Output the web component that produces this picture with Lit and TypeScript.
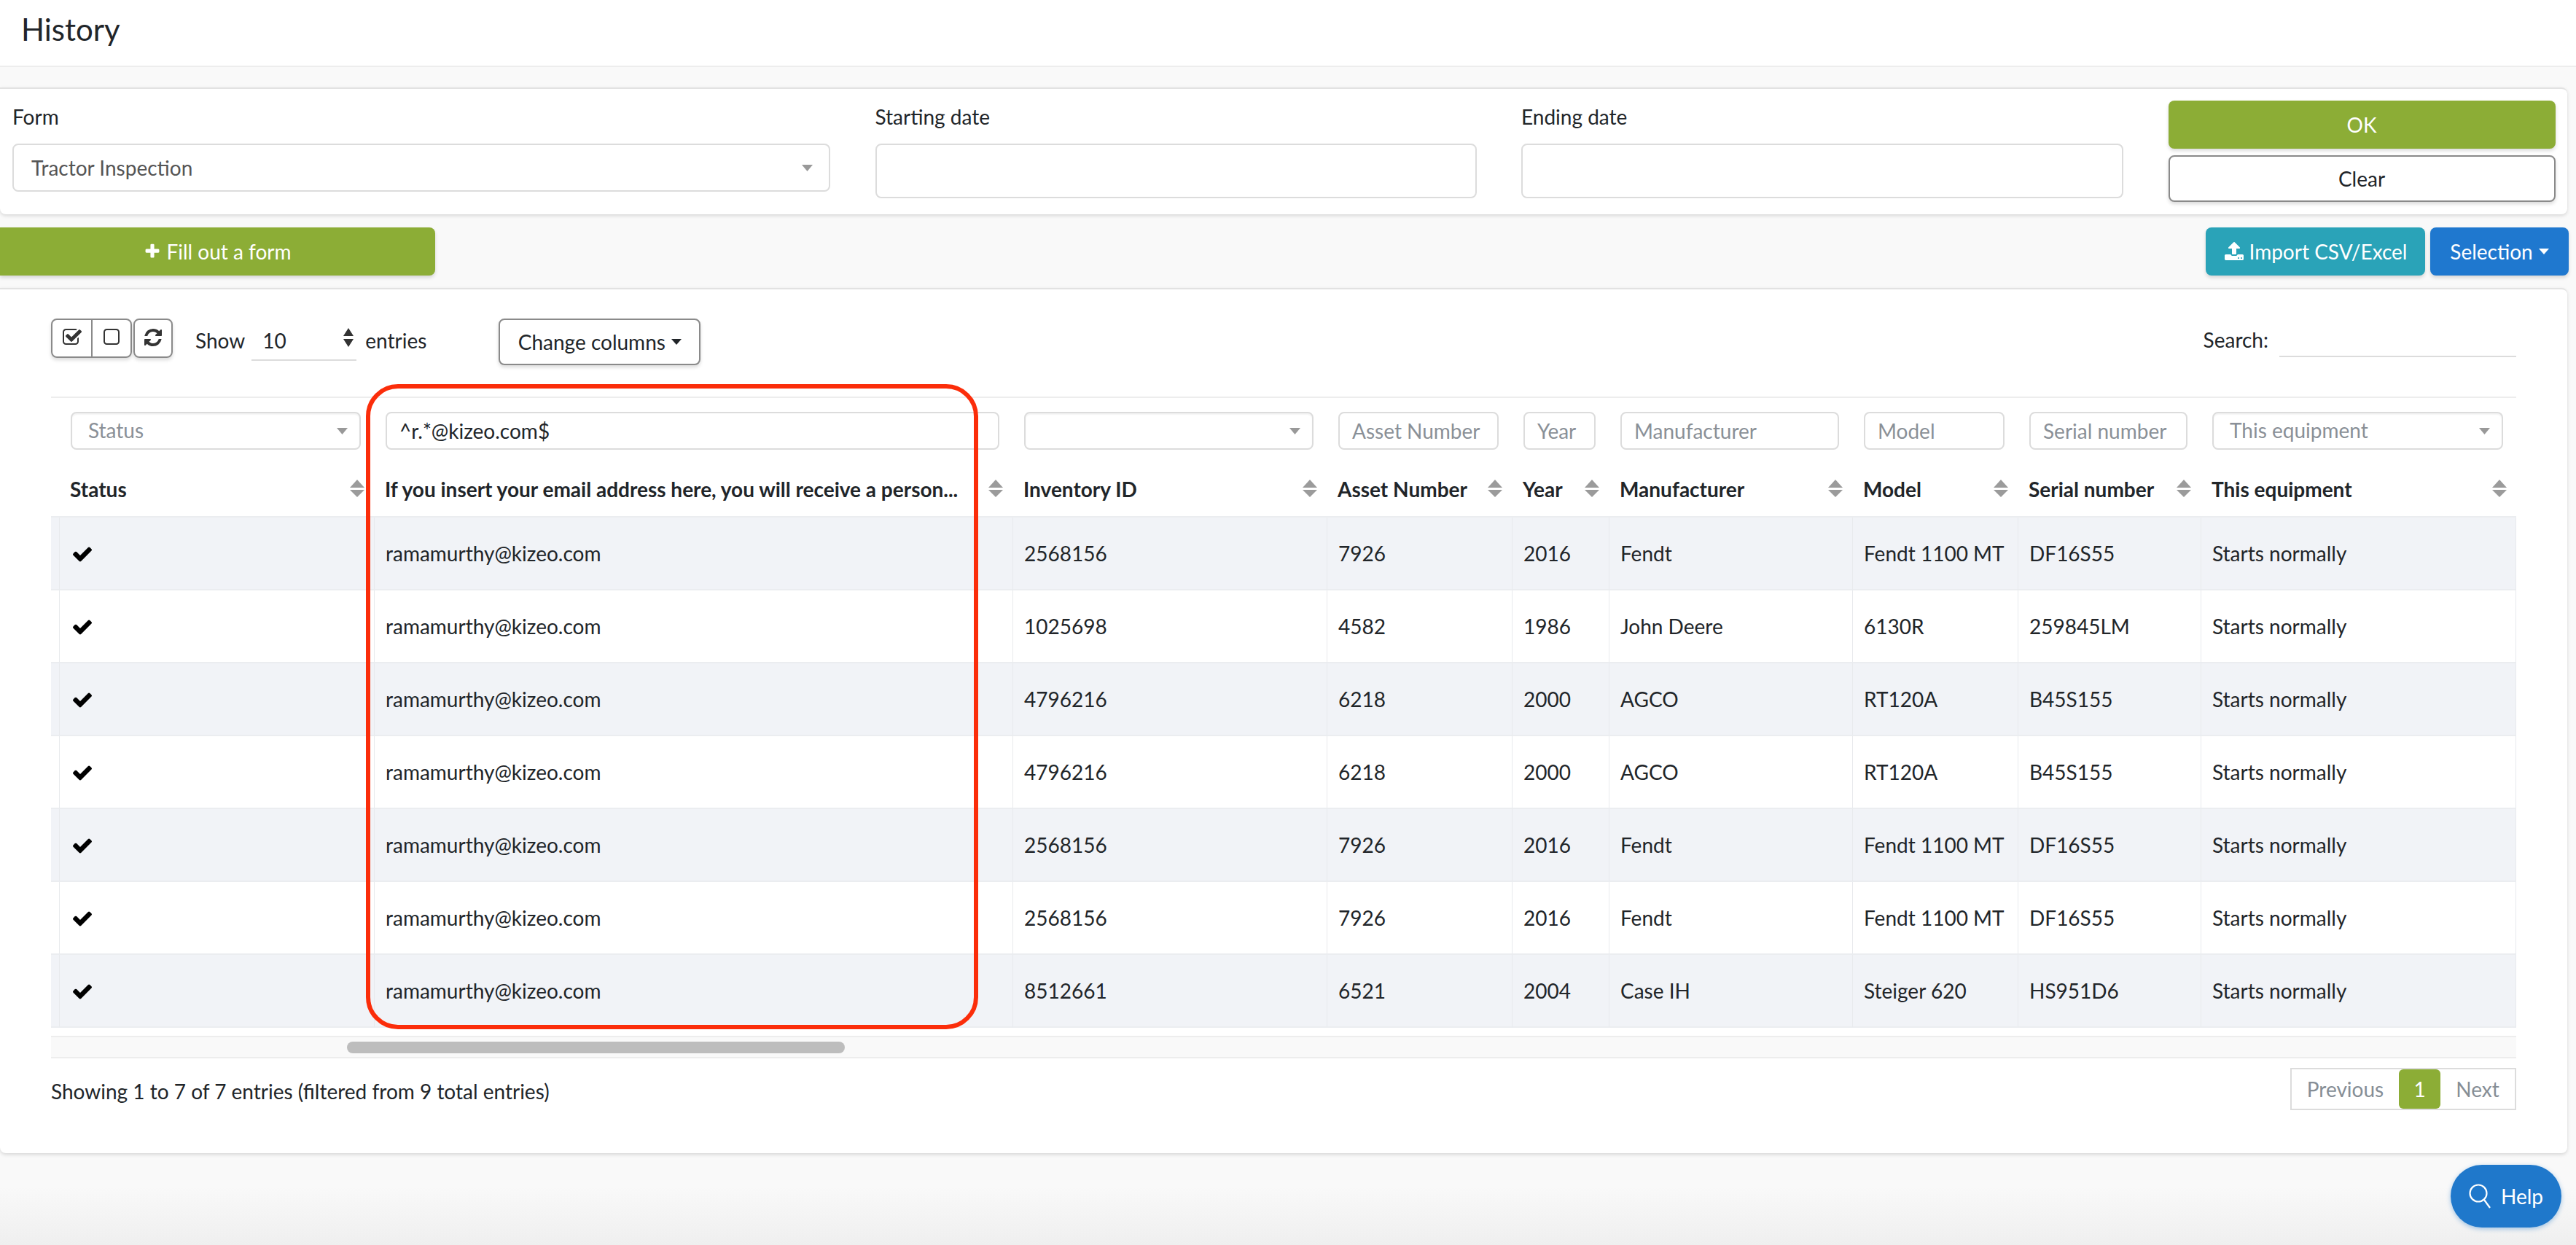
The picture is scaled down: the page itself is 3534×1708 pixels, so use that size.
import { LitElement, html, css, svg } from "lit";
import { customElement } from "lit/decorators.js";

const ICONS: Record<string, string> = {
  check: "M1671 566q0 40-28 68l-724 724-136 136q-28 28-68 28t-68-28l-136-136-362-362q-28-28-28-68t28-68l136-136q28-28 68-28t68 28l294 295 656-657q28-28 68-28t68 28l136 136q28 28 28 68z",
  plus: "M1600 736v192q0 40-28 68t-68 28h-416v416q0 40-28 68t-68 28h-192q-40 0-68-28t-28-68v-416h-416q-40 0-68-28t-28-68v-192q0-40 28-68t68-28h416v-416q0-40 28-68t68-28h192q40 0 68 28t28 68v416h416q40 0 68 28t28 68z",
  upload: "M1344 1472q0-26-19-45t-45-19-45 19-19 45 19 45 45 19 45-19 19-45zm256 0q0-26-19-45t-45-19-45 19-19 45 19 45 45 19 45-19 19-45zm128-224v320q0 40-28 68t-68 28h-1472q-40 0-68-28t-28-68v-320q0-40 28-68t68-28h427q21 56 70.5 92t110.5 36h256q61 0 110.5-36t70.5-92h427q40 0 68 28t28 68zm-325-648q-17 40-59 40h-256v448q0 26-19 45t-45 19h-256q-26 0-45-19t-19-45v-448h-256q-42 0-59-40-17-39 14-69l448-448q18-19 45-19t45 19l448 448q31 30 14 69z",
  refresh: "M1639 1056q0 5-1 7-64 268-268 434.5t-478 166.5q-146 0-282.5-55t-243.5-157l-129 129q-19 19-45 19t-45-19-19-45v-448q0-26 19-45t45-19h448q26 0 45 19t19 45-19 45l-137 137q71 66 161 102t187 36q134 0 250-65t186-179q11-17 53-117 8-23 30-23h192q13 0 22.5 9.5t9.5 22.5zm25-800v448q0 26-19 45t-45 19h-448q-26 0-45-19t-19-45 19-45l138-138q-148-137-349-137-134 0-250 65t-186 179q-11 17-53 117-8 23-30 23h-199q-13 0-22.5-9.5t-9.5-22.5v-7q65-268 270-434.5t480-166.5q146 0 284 55.5t245 156.5l130-129q19-19 45-19t45 19 19 45z",
  checkSquare: "M1472 930v318q0 119-84.5 203.5t-203.5 84.5h-832q-119 0-203.5-84.5t-84.5-203.5v-832q0-119 84.5-203.5t203.5-84.5h832q63 0 117 25 15 7 18 23 3 17-9 29l-49 49q-10 10-23 10-3 0-9-2-23-6-45-6h-832q-66 0-113 47t-47 113v832q0 66 47 113t113 47h832q66 0 113-47t47-113v-254q0-13 9-22l64-64q10-10 23-10 6 0 12 3 20 8 20 29zm231-489l-814 814q-24 24-57 24t-57-24l-430-430q-24-24-24-57t24-57l110-110q24-24 57-24t57 24l263 263 647-647q24-24 57-24t57 24l110 110q24 24 24 57t-24 57z",
  square: "M1312 256h-832q-66 0-113 47t-47 113v832q0 66 47 113t113 47h832q66 0 113-47t47-113v-832q0-66-47-113t-113-47zm288 160v832q0 119-84.5 203.5t-203.5 84.5h-832q-119 0-203.5-84.5t-84.5-203.5v-832q0-119 84.5-203.5t203.5-84.5h832q119 0 203.5 84.5t84.5 203.5z",
};

const fa = (n: string, size: number) => html`<svg class="fa" width=${size} height=${size} viewBox="0 0 1792 1792" fill="currentColor">${svg`<path d=${ICONS[n]}></path>`}</svg>`;

const caret = html`<svg class="caret" width="15" height="9" viewBox="0 0 15 9"><path d="M0 0H15L7.5 9Z" fill="#999"></path></svg>`;
const smallCaret = html`<svg class="scaret" width="14" height="8" viewBox="0 0 14 8"><path d="M0 0H14L7 8Z" fill="currentColor"></path></svg>`;
const sortIcon = html`<svg class="sort" width="20" height="24" viewBox="0 0 20 24"><path d="M10 0L20 11H0Z" fill="#9b9b9b"></path><path d="M0 14H20L10 24Z" fill="#9b9b9b"></path></svg>`;

type Row = [string, string, string, string, string, string];
const ROWS: Row[] = [
  ["2568156", "7926", "2016", "Fendt", "Fendt 1100 MT", "DF16S55"],
  ["1025698", "4582", "1986", "John Deere", "6130R", "259845LM"],
  ["4796216", "6218", "2000", "AGCO", "RT120A", "B45S155"],
  ["4796216", "6218", "2000", "AGCO", "RT120A", "B45S155"],
  ["2568156", "7926", "2016", "Fendt", "Fendt 1100 MT", "DF16S55"],
  ["2568156", "7926", "2016", "Fendt", "Fendt 1100 MT", "DF16S55"],
  ["8512661", "6521", "2004", "Case IH", "Steiger 620", "HS951D6"],
];

const COLS = [11, 432, 876, 431, 254, 133, 334, 227, 251, 433];
const HEADS = ["Status", "If you insert your email address here, you will receive a person...", "Inventory ID", "Asset Number", "Year", "Manufacturer", "Model", "Serial number", "This equipment"];

@customElement("app-root")
export class AppRoot extends LitElement {
  static styles = css`
    :host {
      display: block;
      width: 3534px;
      min-height: 1708px;
      position: relative;
      overflow: hidden;
      font-family: Lato, "Open Sans", sans-serif;
      font-size: 28px;
      line-height: 34px;
      color: #212529;
      background: linear-gradient(to bottom, #f9f9f9 calc(100% - 80px), #efefef 100%);
    }
    * { box-sizing: border-box; }
    .fa { display: block; flex: none; }
    .topbar {
      height: 92px;
      background: #fff;
      border-bottom: 2px solid #ededed;
      padding: 18px 0 0 29px;
    }
    .topbar h1 { margin: 0; font-weight: 400; font-size: 42px; line-height: 44px; }
    .card {
      background: #fff;
      border-top: 2px solid #e2e2e2;
      border-radius: 0 8px 8px 8px;
      box-shadow: 0 2px 5px rgba(0, 0, 0, 0.14);
      margin-right: 12px;
    }
    .form-card {
      margin-top: 28px;
      height: 174px;
      display: flex;
      gap: 61.5px;
      padding: 16px 17px 0;
    }
    .field { flex: none; padding-top: 5px; }
    .field label { display: block; line-height: 34px; margin-bottom: 20px; }
    .control {
      border: 2px solid #dcdcdc;
      border-radius: 8px;
      background: #fff;
    }
    .select {
      display: flex;
      align-items: center;
      justify-content: space-between;
      color: #555;
    }
    .main-select { height: 66px; padding: 0 24px; }
    .main-select .caret { margin-right: -2px; }
    .date { height: 75px; }
    .form-btns { flex: none; width: 531px; display: flex; flex-direction: column; gap: 9px; }
    .btn {
      display: flex;
      align-items: center;
      justify-content: center;
      border-radius: 8px;
      color: #fff;
      box-shadow: 0 3px 5px rgba(0, 0, 0, 0.14);
    }
    .green { background: #8cad36; }
    .teal { background: #2aa3b8; }
    .blue { background: #1f78cf; }
    .outline { background: #fff; color: #212529; border: 2px solid #8a8a8a; }
    .ok { height: 66px; }
    .clear { height: 64px; }
    .actions {
      display: flex;
      justify-content: space-between;
      margin-top: 18px;
      height: 66px;
      padding-right: 10px;
    }
    .fill { width: 597px; border-radius: 0 8px 8px 0; gap: 7px; }
    .right-actions { display: flex; gap: 7px; }
    .import { width: 301px; gap: 7px; }
    .selection { width: 190px; gap: 8px; }
    .table-card {
      margin-top: 17px;
      height: 1187px;
      padding: 40px 70px 0;
    }
    .toolbar { display: flex; align-items: flex-start; height: 107px; position: relative; }
    .group { display: flex; height: 54px; margin-right: 2px; border: 2px solid #8a8a8a; border-radius: 8px; box-shadow: 0 3px 5px rgba(0, 0, 0, 0.14); }
    .group span { display: flex; align-items: flex-start; padding-top: 10px; justify-content: center; width: 54px; color: #333; }
    .group span + span { border-left: 2px solid #8a8a8a; }
    .show { margin-left: 29px; margin-right: 9px; padding-top: 13px; }
    .len {
      width: 144px;
      height: 58px;
      border-bottom: 2px solid #dcdcdc;
      padding: 13px 4px 0 15px;
      display: flex;
      justify-content: space-between;
      margin-right: 12px;
    }
    .entries { padding-top: 13px; margin-right: 99px; }
    .change { width: 277px; height: 64px; gap: 8px; }
    .search { margin-left: auto; display: flex; gap: 15px; padding-top: 12px; }
    .search div { width: 325px; height: 41px; border-bottom: 2px solid #dcdcdc; }
    table {
      border-collapse: separate;
      border-spacing: 0;
      table-layout: fixed;
      width: 3382px;
      border-top: 2px solid #ededed;
    }
    .filters th { height: 94px; padding: 0 18px 4px 16px; vertical-align: middle; font-weight: 400; }
    .f {
      height: 52px;
      display: flex;
      align-items: center;
      padding: 0 17px;
      color: #8a9097;
      white-space: nowrap;
      overflow: hidden;
    }
    .f.text { padding: 0 0 0 17px; }
    .f.value { color: #212529; padding-left: 17px; }
    .f.pick { justify-content: space-between; padding: 0 16px 0 22px; box-shadow: inset 0 2px 2px rgba(0, 0, 0, 0.05); }
    .f.pick span { padding-bottom: 2px; }
    .f.empty { justify-content: flex-end; }
    .heads th {
      height: 70px;
      padding: 0 0 6px 15px;
      text-align: left;
      font-weight: 700;
      border-bottom: 2px solid #ebedf0;
      position: relative;
      white-space: nowrap;
      overflow: hidden;
    }
    .heads .sort { position: absolute; right: 13px; top: 18px; }
    td {
      height: 100px;
      padding: 0 0 0 15px;
      border-bottom: 2px solid #ebedf0;
      border-left: 1px solid #e8eaed;
      white-space: nowrap;
    }
    td.stripe { padding: 0; border-left: 0; }
    td:last-child { border-right: 1px solid #e8eaed; }
    tr.odd td { background: #f1f3f7; }
    td .tick { display: block; color: #000; margin: 2px 0 0 1px; }
    .bar {
      margin-top: 11px;
      height: 31px;
      border-top: 2px solid #ededed;
      border-bottom: 2px solid #ededed;
      background: #f9f9f9;
      padding: 6px 0 0 406px;
    }
    .thumb { width: 683px; height: 16px; border-radius: 8px; background: #bdbdbd; }
    .foot { display: flex; justify-content: space-between; margin-top: 13px; }
    .info { padding-top: 15px; }
    .pager {
      display: flex;
      width: 310px;
      height: 58px;
      border: 2px solid #dcdcdc;
      color: #868e96;
    }
    .pager span { display: flex; align-items: center; justify-content: center; }
    .pager .prev { width: 147px; }
    .pager .cur { width: 57px; background: #8cad36; color: #fff; border-radius: 6px; height: 54px; }
    .pager .next { flex: 1; }
    .redbox {
      position: absolute;
      left: 502px;
      top: 527px;
      width: 840px;
      height: 885px;
      border: 6px solid #fb2d0a;
      border-radius: 44px;
      pointer-events: none;
    }
    .help {
      position: absolute;
      left: 3362px;
      top: 1598px;
      width: 152px;
      height: 86px;
      border-radius: 43px;
      background: #1f78cb;
      color: #fff;
      display: flex;
      align-items: center;
      justify-content: center;
      gap: 14px;
      box-shadow: 0 2px 6px rgba(31, 120, 203, 0.4);
    }
  `;

  render() {
    return html`
      <div class="topbar"><h1>History</h1></div>

      <section class="card form-card">
        <div class="field" style="width:1122px">
          <label>Form</label>
          <div class="control select main-select"><span>Tractor Inspection</span>${caret}</div>
        </div>
        <div class="field" style="width:825px">
          <label>Starting date</label>
          <div class="control date"></div>
        </div>
        <div class="field" style="width:826px">
          <label>Ending date</label>
          <div class="control date"></div>
        </div>
        <div class="form-btns">
          <div class="btn green ok">OK</div>
          <div class="btn outline clear">Clear</div>
        </div>
      </section>

      <div class="actions">
        <div class="btn green fill">${fa("plus", 24)}<span>Fill out a form</span></div>
        <div class="right-actions">
          <div class="btn teal import">${fa("upload", 28)}<span>Import CSV/Excel</span></div>
          <div class="btn blue selection"><span>Selection</span>${smallCaret}</div>
        </div>
      </div>

      <section class="card table-card">
        <div class="toolbar">
          <div class="group" style="width:111px">
            <span>${fa("checkSquare", 28)}</span>
            <span>${fa("square", 28)}</span>
          </div>
          <div class="group" style="width:54px"><span>${fa("refresh", 28)}</span></div>
          <div class="show">Show</div>
          <div class="len"><span>10</span>
            <svg class="updown" width="14" height="26" viewBox="0 0 14 26"><path d="M7 0L14 11H0Z M0 15H14L7 26Z" fill="#333"></path></svg>
          </div>
          <div class="entries">entries</div>
          <div class="btn outline change"><span>Change columns</span>${smallCaret}</div>
          <div class="search"><span>Search:</span><div></div></div>
        </div>

        <table>
          <colgroup>${COLS.map((w) => html`<col style="width:${w}px" />`)}</colgroup>
          <thead>
            <tr class="filters">
              <th></th>
              <th><div class="control f pick"><span>Status</span>${caret}</div></th>
              <th><div class="control f value">^r.*@kizeo.com$</div></th>
              <th><div class="control f pick empty">${caret}</div></th>
              <th><div class="control f text">Asset Number</div></th>
              <th><div class="control f text">Year</div></th>
              <th><div class="control f text">Manufacturer</div></th>
              <th><div class="control f text">Model</div></th>
              <th><div class="control f text">Serial number</div></th>
              <th><div class="control f pick"><span>This equipment</span>${caret}</div></th>
            </tr>
            <tr class="heads">
              <th></th>
              ${HEADS.map((h) => html`<th>${h}${sortIcon}</th>`)}
            </tr>
          </thead>
          <tbody>
            ${ROWS.map((r, i) => html`
              <tr class=${i % 2 === 0 ? "odd" : ""}>
                <td class="stripe"></td>
                <td><span class="tick">${fa("check", 30)}</span></td>
                <td>ramamurthy@kizeo.com</td>
                ${r.map((c) => html`<td>${c}</td>`)}
                <td>Starts normally</td>
              </tr>
            `)}
          </tbody>
        </table>

        <div class="bar"><div class="thumb"></div></div>

        <div class="foot">
          <div class="info">Showing 1 to 7 of 7 entries (filtered from 9 total entries)</div>
          <div class="pager">
            <span class="prev">Previous</span>
            <span class="cur">1</span>
            <span class="next">Next</span>
          </div>
        </div>
      </section>

      <div class="redbox"></div>

      <div class="help">
        <svg width="30" height="34" viewBox="0 0 30 34" fill="none" stroke="#fff" stroke-width="2.2"><circle cx="13" cy="13" r="11.5"></circle><path d="M21 22L29 33"></path></svg>
        <span>Help</span>
      </div>
    `;
  }
}
